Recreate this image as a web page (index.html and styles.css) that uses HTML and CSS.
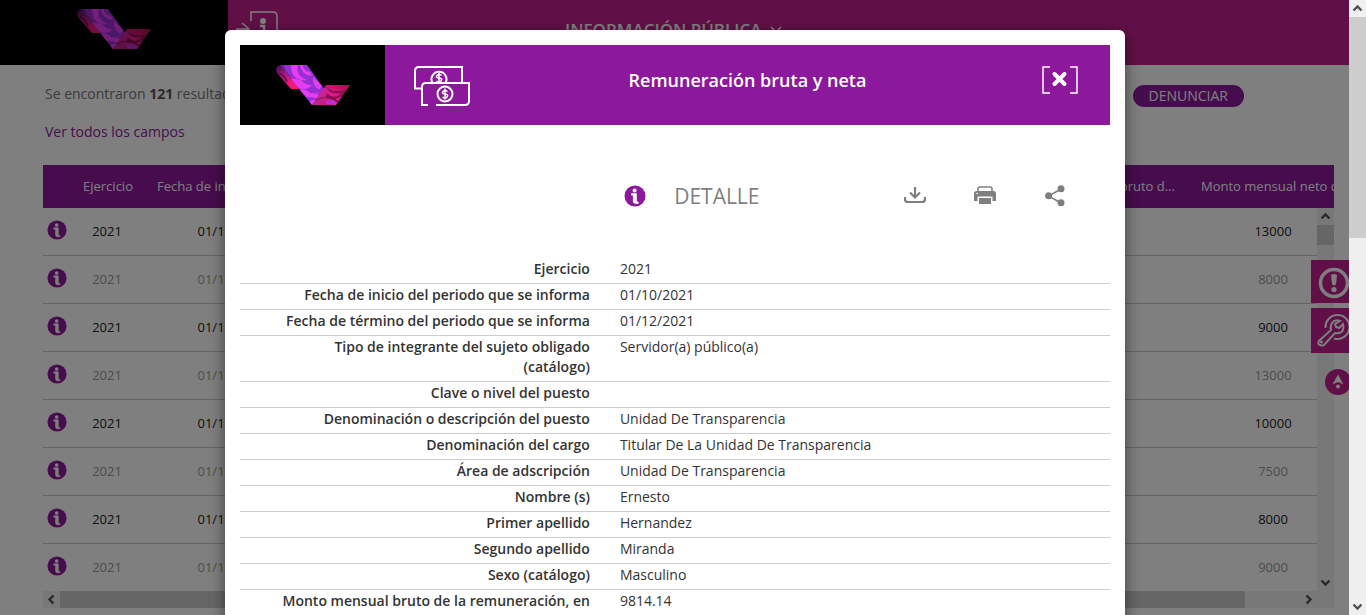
FILE: index.html
```html
<!DOCTYPE html>
<html lang="es">
<head>
<meta charset="utf-8">
<title>Remuneración bruta y neta</title>
<link rel="stylesheet" href="styles.css">
</head>
<body>
<svg class="defs" aria-hidden="true">
  <defs>
    <linearGradient id="lg-fold" x1="0" y1="0" x2=".6" y2="1"><stop offset="0" stop-color="#3a0a4a"/><stop offset=".4" stop-color="#a0187c"/><stop offset=".8" stop-color="#f01878"/></linearGradient>
    <linearGradient id="lg-tail" x1="1" y1="0" x2="0" y2="1"><stop offset="0" stop-color="#a01048"/><stop offset=".5" stop-color="#e8188a"/><stop offset="1" stop-color="#b81a80"/></linearGradient>
    <clipPath id="cp-band"><path d="M4 0h27l18 25-10 15h-3L9 6z"/></clipPath>
    <clipPath id="cp-tail"><path d="M36 40l14-20h24L60 40z"/></clipPath>
  </defs>
  <symbol id="logo" viewBox="0 0 74 40">
    <path d="M0 4Q1 0 5 0h5l14 24h-9L1 8z" fill="url(#lg-fold)"/>
    <path d="M3 8q6 3 8 9" stroke="#52104e" stroke-width="1.500" fill="none"/>
    <g clip-path="url(#cp-band)">
      <path d="M0 0h52v40H0z" fill="#9630d2"/>
      <g fill="#e63cf2">
        <path d="M15 0h7q-3 10 9 15-16 2-16-15z"/>
        <path d="M24 0h3q0 6 7 7l2 4Q25 10 24 0z"/>
        <path d="M13 14q10-1 14 3t9 3q-5 6-13 3T13 14z"/>
        <path d="M21 25q8-2 12 2t10 0q-5 6-10 5t-12-7z"/>
        <path d="M27 32q8-6 13-3t8-2l-6 7q-8-3-15-2z"/>
        <path d="M30 40q5-7 13-4l-3 4z"/>
        <path d="M37 12q-1 8 6 13l3-4z"/>
      </g>
      <path d="M3 0h5q1 6 7 12l-2 3z" fill="#4a1470" fill-opacity=".5"/>
    </g>
    <path d="M36 40l14-20h24L60 40z" fill="url(#lg-tail)"/>
    <g clip-path="url(#cp-tail)" fill="none" stroke="#86104e" stroke-width="2">
      <path d="M50 21q3 9 20 5M40 35q13-7 24 4M50 29q8 8 18-1"/>
      <path d="M36 40l14-20q4 3 3 7l-8 13z" fill="#b83098" fill-opacity=".45" stroke="none"/>
      <path d="M50 38q7-3 11 3" stroke="#b830d8" stroke-width="4"/>
    </g>
  </symbol>
  <symbol id="info" viewBox="0 0 22 22">
    <circle cx="11" cy="11" r="10.5" fill="#8c189b"/>
    <circle cx="10.6" cy="5.6" r="2" fill="#fff"/>
    <path d="M7.500 8.600h5v7.600q0 .8 1.800.8v1.400q-5 .6-5-1.600V10.200H7.500z" fill="#fff" stroke="#fff" stroke-width=".6"/>
  </symbol>
  <symbol id="chev" viewBox="0 0 17 17"><path d="M4.500 10.500l4-4 4 4" fill="none" stroke="#505050" stroke-width="2.400"/></symbol>
</svg>

<div class="page">
  <header class="topbar">
    <div class="brand"><svg class="logo"><use href="#logo"/></svg></div>
    <div class="banner">
      <svg class="entry-icon" viewBox="0 0 44 44" fill="none" stroke="#fff" stroke-width="1.500"><path d="M15 10V1h22q4 0 4 4v36H15v-9M0 18h13M6 12l7 6-7 6"/><path d="M24 15h4v14M24 29h8" stroke-width="2.500"/><circle cx="27" cy="10" r="3" fill="#fff" stroke="none"/></svg>
      <button class="section" type="button">INFORMACIÓN PÚBLICA
        <svg viewBox="0 0 12 8" fill="none" stroke="#fff" stroke-width="1.500"><path d="M1 1l5 5 5-5"/></svg></button>
    </div>
  </header>

  <main class="content">
    <div class="summary">
      <p>Se encontraron <strong>121</strong> resultados</p>
      <button class="report" type="button">DENUNCIAR</button>
    </div>
    <a class="all-fields" href="#">Ver todos los campos</a>

    <div class="grid">
      <table class="results">
        <colgroup><col class="c-info"><col class="c-year"><col class="c-date"><col><col class="c-gross"><col class="c-net"></colgroup>
        <thead><tr><th></th><th>Ejercicio</th><th>Fecha de inicio del...</th><th></th><th>Monto mensual bruto d...</th><th>Monto mensual neto d...</th></tr></thead>
        <tbody>
          <tr><td><svg class="info"><use href="#info"/></svg></td><td>2021</td><td>01/10/2021</td><td></td><td></td><td>13000</td></tr>
          <tr><td><svg class="info"><use href="#info"/></svg></td><td>2021</td><td>01/10/2021</td><td></td><td></td><td>8000</td></tr>
          <tr><td><svg class="info"><use href="#info"/></svg></td><td>2021</td><td>01/10/2021</td><td></td><td></td><td>9000</td></tr>
          <tr><td><svg class="info"><use href="#info"/></svg></td><td>2021</td><td>01/10/2021</td><td></td><td></td><td>13000</td></tr>
          <tr><td><svg class="info"><use href="#info"/></svg></td><td>2021</td><td>01/10/2021</td><td></td><td></td><td>10000</td></tr>
          <tr><td><svg class="info"><use href="#info"/></svg></td><td>2021</td><td>01/10/2021</td><td></td><td></td><td>7500</td></tr>
          <tr><td><svg class="info"><use href="#info"/></svg></td><td>2021</td><td>01/10/2021</td><td></td><td></td><td>8000</td></tr>
          <tr><td><svg class="info"><use href="#info"/></svg></td><td>2021</td><td>01/10/2021</td><td></td><td></td><td>9000</td></tr>
        </tbody>
      </table>
      <div class="bar vertical grid-v"><svg><use href="#chev"/></svg><i></i><svg class="down"><use href="#chev"/></svg></div>
      <div class="bar grid-h"><svg class="left"><use href="#chev"/></svg><i></i><svg class="right"><use href="#chev"/></svg></div>
    </div>
  </main>

  <nav class="side">
    <button type="button" aria-label="Avisos"><svg viewBox="0 0 38 43"><circle cx="23" cy="23" r="13.500" fill="none" stroke="#fff" stroke-width="3.500"/><path d="M20 15q3-2 6 0l-1 9q-2 3-4 0z" fill="#fff"/><circle cx="23" cy="29.500" r="2.600" fill="#fff"/></svg></button>
    <button type="button" aria-label="Herramientas"><svg viewBox="0 0 38 45" fill="none" stroke="#fff" stroke-width="2"><path d="M14.500 20A12 12 0 1 1 23 30.500"/><path d="M29 13q-5-2-8 2-2 3-1 7L8 33q-2 3 1 4t4 0l11-12q6 1 8-3 1-3 0-6l-4 4-3-1-1-3z"/><circle cx="10.500" cy="34" r="1.500" fill="#fff" stroke="none"/></svg></button>
    <a class="to-top" href="#" aria-label="Subir"><svg viewBox="0 0 26 26"><circle cx="13" cy="13" r="13" fill="#c0208c"/><path d="M13 5.500l5.500 10-5.500-2.500-5.500 2.500z" fill="#fff"/><circle cx="13" cy="17.500" r="2" fill="#fff"/></svg></a>
  </nav>

  <div class="backdrop">
    <section class="modal" role="dialog" aria-labelledby="dlg-title">
      <header class="modal-head">
        <div class="modal-brand"><svg class="logo"><use href="#logo"/></svg></div>
        <svg class="money" viewBox="0 0 56 40" fill="none" stroke="#fff" stroke-width="2">
          <path d="M7 22.500H1V5q0-4 4-4h43v16"/><path d="M14 39H8V21q0-4 4-4h43v18q0 4-4 4H22"/>
          <path d="M18.500 17A7.500 7.500 0 1 1 31.500 17"/><circle cx="31" cy="28" r="7.500"/>
          <path stroke-width="1.500" d="M27.500 9.500q-2.500-2-4.500 0t2 2.500 2 3-4.500 0M25 7v10M33.500 25.500q-2.500-2-4.500 0t2 2.500 2 3-4.500 0M31 22.500v11"/>
        </svg>
        <h1 id="dlg-title">Remuneración bruta y neta</h1>
        <button class="close" type="button" aria-label="Cerrar"><svg viewBox="0 0 36 28" fill="none" stroke="#fff"><path d="M8 1H1v26h7M28 1h7v26h-7" stroke-width="1.500"/><path d="M12.500 8l10 10M22.500 8l-10 10" stroke-width="4" stroke-linecap="round"/></svg></button>
      </header>

      <div class="tools">
        <svg class="info"><use href="#info"/></svg>
        <h2>DETALLE</h2>
        <button type="button" aria-label="Descargar"><svg viewBox="0 0 22 22" fill="none" stroke="#7f7f7f" stroke-width="2.200"><path d="M1 12v2q0 3 3 3h14q3 0 3-3v-2M11 2v10M6 7.500l5 5 5-5"/></svg></button>
        <button type="button" aria-label="Imprimir"><svg viewBox="0 0 22 22" fill="#7f7f7f"><path d="M4 6V4q0-2 2-2h10q2 0 2 2v2" fill="none" stroke="#7f7f7f" stroke-width="1.500"/><path d="M2.500 6h17q2.500 0 2.500 2.500V16h-3.500v-4.500h-15V16H0V8.500Q0 6 2.500 6z"/><path d="M5 13h12v6H5z"/><circle cx="3" cy="8.500" r=".8" fill="#fff"/></svg></button>
        <button type="button" aria-label="Compartir"><svg viewBox="0 0 22 22" fill="#7f7f7f"><path d="M17 4L4.500 11l12.500 7" fill="none" stroke="#7f7f7f" stroke-width="1.500"/><circle cx="17" cy="3.700" r="3.500"/><circle cx="4.600" cy="10.700" r="3.500"/><circle cx="17" cy="17.700" r="3.500"/></svg></button>
      </div>

      <table class="detail">
        <tr><th scope="row">Ejercicio</th><td>2021</td></tr>
        <tr><th scope="row">Fecha de inicio del periodo que se informa</th><td>01/10/2021</td></tr>
        <tr><th scope="row">Fecha de término del periodo que se informa</th><td>01/12/2021</td></tr>
        <tr><th scope="row">Tipo de integrante del sujeto obligado (catálogo)</th><td>Servidor(a) público(a)</td></tr>
        <tr><th scope="row">Clave o nivel del puesto</th><td></td></tr>
        <tr><th scope="row">Denominación o descripción del puesto</th><td>Unidad De Transparencia</td></tr>
        <tr><th scope="row">Denominación del cargo</th><td>Titular De La Unidad De Transparencia</td></tr>
        <tr><th scope="row">Área de adscripción</th><td>Unidad De Transparencia</td></tr>
        <tr><th scope="row">Nombre (s)</th><td>Ernesto</td></tr>
        <tr><th scope="row">Primer apellido</th><td>Hernandez</td></tr>
        <tr><th scope="row">Segundo apellido</th><td>Miranda</td></tr>
        <tr><th scope="row">Sexo (catálogo)</th><td>Masculino</td></tr>
        <tr><th scope="row">Monto mensual bruto de la remuneración, en tabulador</th><td>9814.14</td></tr>
      </table>
    </section>
  </div>
</div>
<div class="bar vertical page-bar"><svg><use href="#chev"/></svg><i></i><svg class="down"><use href="#chev"/></svg></div>
</body>
</html>
```
FILE: styles.css
```css
* { box-sizing: border-box; }
body {
  margin: 0;
  height: 100vh;
  display: flex;
  overflow: hidden;
  font: 14px/20px "Open Sans", sans-serif;
  color: #333;
  background: #fff;
}
button { font: inherit; border: 0; padding: 0; background: none; display: flex; align-items: center; }
svg { display: block; }
.defs { position: absolute; width: 0; height: 0; }

.page { flex: 1; min-width: 0; position: relative; overflow: hidden; }
.logo { width: 74px; height: 40px; }

.topbar { display: flex; height: 65px; }
.brand { width: 228px; background: #000; padding: 9px 0 0 77px; }
.banner { flex: 1; background: #c0208c; display: flex; align-items: flex-start; padding: 11px 8px; }
.entry-icon { width: 44px; height: 44px; }
.section { margin: 7px auto 0 285px; gap: 8px; color: #fff; font-size: 17px; line-height: 24px; font-weight: 600; }
.section svg { width: 12px; height: 8px; }

.content { padding: 20px 15px 0 43px; }
.summary { display: flex; justify-content: space-between; align-items: flex-start; height: 22px; padding: 0 90px 0 2px; }
.summary p { margin: 0; line-height: 18px; color: #777; }
.summary strong { color: #555; }
.report { height: 22px; padding: 0 16px; border-radius: 11px; background: #8c189b; color: #fff; }
.all-fields { display: block; margin: 15px 2px 23px; color: #8c189b; text-decoration: none; }

.grid { display: grid; grid-template: 43px auto 17px / minmax(0, 1fr) 17px; overflow: hidden; }
.results { grid-area: 1 / 1 / 3 / 3; width: calc(100% + 24px); table-layout: fixed; border-collapse: separate; border-spacing: 0; font-size: 13px; color: #222; }
.c-info { width: 27px; }
.c-year { width: 74px; }
.c-date { width: 176px; }
.c-gross { width: 180px; }
.c-net { width: 170px; }
.results th { height: 43px; padding: 0 0 2px 13px; background: #8c189b; color: #fff; font-weight: 400; text-align: left; white-space: nowrap; }
.results td { height: 48px; padding: 0 0 2px; text-align: center; border-bottom: 1px solid #c8c8c8; }
.results tr:nth-child(even) td { color: #999; }
.results tr:last-child td { height: 47px; border: 0; }
.results .info { width: 20px; height: 20px; margin: 0 auto 2px; }

.bar { display: flex; background: #f0f0f0; }
.bar svg { width: 17px; height: 17px; flex: none; }
.bar i { background: #cdcdcd; }
.bar.vertical { flex-direction: column; }
.bar .down { margin-top: auto; transform: rotate(180deg); }
.bar .left { transform: rotate(-90deg); }
.bar .right { margin-left: auto; transform: rotate(90deg); }
.grid-v { grid-area: 2 / 2; }
.grid-v i { height: 20px; }
.grid-h { grid-area: 3 / 1 / 4 / 3; padding-right: 17px; }
.grid-h i { width: 93%; }
.page-bar { width: 17px; }
.page-bar i { height: 221px; }

.side { position: absolute; right: 0; top: 260px; display: flex; flex-direction: column; align-items: flex-end; gap: 5px; }
.side button { background: #c0208c; }
.side button svg { width: 38px; }
.to-top { margin: 11px -2px 0 0; }
.to-top svg { width: 26px; height: 26px; }

.backdrop { position: absolute; inset: 0; padding-top: 30px; background: rgba(0, 0, 0, .5); }
.modal { max-width: 900px; margin: 0 auto; padding: 15px; background: #fff; border-radius: 6px; box-shadow: 0 5px 15px rgba(0, 0, 0, .5); }
.modal-head { display: flex; align-items: flex-start; height: 80px; background: #8c189b; color: #fff; }
.modal-brand { width: 145px; height: 80px; padding: 20px 0 0 36px; background: #000; }
.money { width: 56px; height: 40px; margin: 21px 0 0 29px; }
.modal-head h1 { flex: 1; margin: 23px 0 0; padding-right: 16px; text-align: center; font-size: 18px; line-height: 24px; font-weight: 600; }
.close { margin: 21px 32px 0 0; }
.close svg { width: 36px; height: 28px; }

.tools { display: flex; align-items: center; justify-content: flex-end; height: 133px; padding: 8px 44px 0 0; }
.tools .info { width: 22px; height: 22px; }
.tools h2 { margin: 0 144px 0 28px; font-size: 21px; line-height: 28px; font-weight: 400; color: #7f7f7f; }
.tools button + button { margin-left: 48px; }
.tools button svg { width: 22px; height: 22px; }

.detail { width: 100%; border-collapse: separate; border-spacing: 0; table-layout: fixed; }
.detail th, .detail td { padding: 1px 15px 4px; border-bottom: 1px solid #ccc; vertical-align: top; }
.detail th { width: 42%; padding-left: 30px; text-align: right; font-weight: 600; }
```
